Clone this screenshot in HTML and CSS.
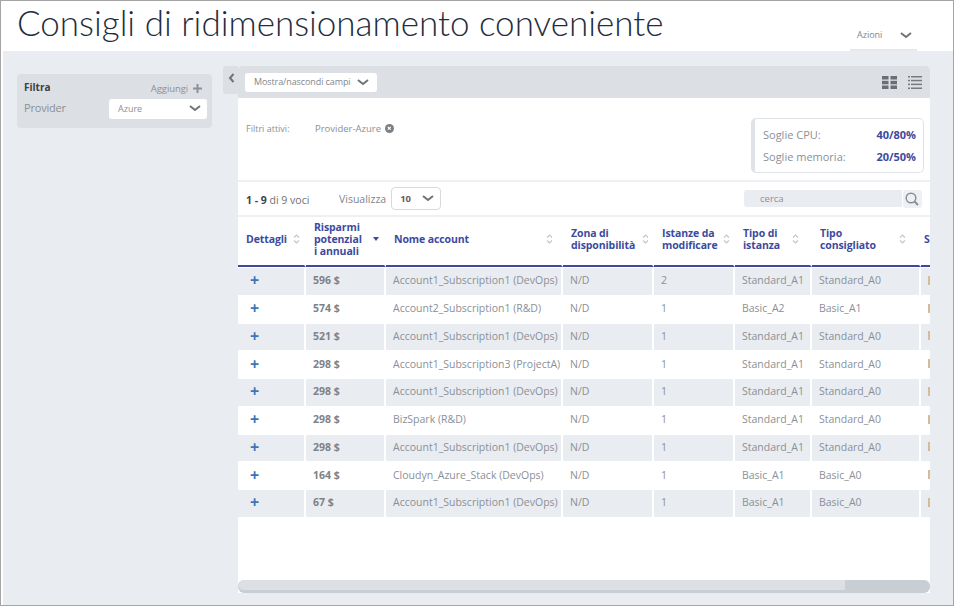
FILE: index.html
```html
<!doctype html>
<html>
<head>
<meta charset="utf-8">
<title>Consigli di ridimensionamento conveniente</title>
<link rel="stylesheet" href="styles.css">
</head>

<body>
<div class="frame">
	<header class="top">
		<h1>Consigli di ridimensionamento conveniente</h1>
		<div class="azioni">Azioni
			<svg class="chev" width="12" height="7" viewBox="0 0 12 7"><path d="M1 1l5 4 5-4" fill="none" stroke="#6f7479" stroke-width="2"/></svg>
		</div>
	</header>
	<div class="main">
		<aside class="filtra">
			<div class="filtra-head"><b>Filtra</b>
				<span class="aggiungi">Aggiungi
					<svg width="9" height="9" viewBox="0 0 9 9"><path d="M4.500 0v9M0 4.500h9" stroke="#8b9096" stroke-width="2"/></svg>
				</span>
			</div>
			<div class="filtra-row">
				<span class="provider-label">Provider</span>
				<div class="provider">Azure
					<svg class="chev" width="12" height="7" viewBox="0 0 12 7"><path d="M1 1l5 4 5-4" fill="none" stroke="#6f7479" stroke-width="2"/></svg>
				</div>
			</div>
		</aside>
		<div class="collapse">
			<svg width="7" height="10" viewBox="0 0 7 10"><path d="M5.500 1L2 5l3.500 4" fill="none" stroke="#6f7479" stroke-width="2"/></svg>
		</div>
		<section class="panel">
			<div class="toolbar">
				<div class="campi">Mostra/nascondi campi
					<svg class="chev" width="12" height="7" viewBox="0 0 12 7"><path d="M1 1l5 4 5-4" fill="none" stroke="#6f7479" stroke-width="2"/></svg>
				</div>
				<div class="views">
					<svg width="15" height="13" viewBox="0 0 15 13" fill="#6b6f74"><rect width="6.500" height="3.500"/><rect x="8.500" width="6.500" height="3.500"/><rect y="4.800" width="6.500" height="3.500"/><rect x="8.500" y="4.800" width="6.500" height="3.500"/><rect y="9.500" width="6.500" height="3.500"/><rect x="8.500" y="9.500" width="6.500" height="3.500"/></svg>
					<svg width="14" height="13" viewBox="0 0 14 13" fill="#777b80"><rect width="2" height="1.500"/><rect x="3" width="11" height="1.500"/><rect y="3.800" width="2" height="1.500"/><rect x="3" y="3.800" width="11" height="1.500"/><rect y="7.600" width="2" height="1.500"/><rect x="3" y="7.600" width="11" height="1.500"/><rect y="11.500" width="2" height="1.500"/><rect x="3" y="11.500" width="11" height="1.500"/></svg>
				</div>
			</div>
			<div class="info">
				<div class="attivi">
					<span class="attivi-label">Filtri attivi:</span>
					<span>Provider-Azure</span>
					<svg width="9" height="9" viewBox="0 0 9 9"><circle cx="4.500" cy="4.500" r="4.500" fill="#7b8085"/><path d="M2.800 2.800l2.900 2.900M5.700 2.800L2.800 5.700" stroke="#fff" stroke-width="1.200"/></svg>
				</div>
				<div class="soglie">
					<div class="soglia"><span>Soglie CPU:</span><b>40/80%</b></div>
					<div class="soglia"><span>Soglie memoria:</span><b>20/50%</b></div>
				</div>
			</div>
			<div class="pager">
				<span class="voci"><b>1 - 9</b> di 9 voci</span>
				<span class="visualizza">Visualizza</span>
				<div class="size">10
					<svg class="chev" width="12" height="7" viewBox="0 0 12 7"><path d="M1 1l5 4 5-4" fill="none" stroke="#6f7479" stroke-width="2"/></svg>
				</div>
				<div class="search">
					<div class="search-box">cerca</div>
					<div class="search-btn">
						<svg width="14" height="14" viewBox="0 0 14 14"><circle cx="6" cy="6" r="4.800" fill="none" stroke="#8a8f94" stroke-width="1.500"/><path d="M9.500 9.500L13 13" stroke="#8a8f94" stroke-width="2"/></svg>
					</div>
				</div>
			</div>
			<div class="table-wrap">
				<table>
					<thead>
						<tr>
							<th class="c-det"><div class="th"><span>Dettagli</span><svg class="sort" width="7" height="10" viewBox="0 0 7 10"><path d="M1 3.500l2.500-2.500 2.500 2.500M1 6.500l2.500 2.500 2.500-2.500" fill="none" stroke="#c3c6cb" stroke-width="1.200"/></svg></div></th>
							<th class="c-ris"><div class="th"><span>Risparmi<br>potenzial<br>i annuali</span><i class="sort-down"></i></div></th>
							<th class="c-nome"><div class="th"><span>Nome account</span><svg class="sort" width="7" height="10" viewBox="0 0 7 10"><path d="M1 3.500l2.500-2.500 2.500 2.500M1 6.500l2.500 2.500 2.500-2.500" fill="none" stroke="#c3c6cb" stroke-width="1.200"/></svg></div></th>
							<th class="c-zona"><div class="th"><span>Zona di<br>disponibilità</span><svg class="sort" width="7" height="10" viewBox="0 0 7 10"><path d="M1 3.500l2.500-2.500 2.500 2.500M1 6.500l2.500 2.500 2.500-2.500" fill="none" stroke="#c3c6cb" stroke-width="1.200"/></svg></div></th>
							<th class="c-ist"><div class="th"><span>Istanze da<br>modificare</span><svg class="sort" width="7" height="10" viewBox="0 0 7 10"><path d="M1 3.500l2.500-2.500 2.500 2.500M1 6.500l2.500 2.500 2.500-2.500" fill="none" stroke="#c3c6cb" stroke-width="1.200"/></svg></div></th>
							<th class="c-tipo"><div class="th"><span>Tipo di<br>istanza</span><svg class="sort" width="7" height="10" viewBox="0 0 7 10"><path d="M1 3.500l2.500-2.500 2.500 2.500M1 6.500l2.500 2.500 2.500-2.500" fill="none" stroke="#c3c6cb" stroke-width="1.200"/></svg></div></th>
							<th class="c-cons"><div class="th"><span>Tipo<br>consigliato</span><svg class="sort" width="7" height="10" viewBox="0 0 7 10"><path d="M1 3.500l2.500-2.500 2.500 2.500M1 6.500l2.500 2.500 2.500-2.500" fill="none" stroke="#c3c6cb" stroke-width="1.200"/></svg></div></th>
							<th class="c-s"><div class="th"><span>S</span></div></th>
						</tr>
					</thead>
					<tbody>
						<tr><td class="add">+</td><td class="money">596 $</td><td>Account1_Subscription1 (DevOps)</td><td>N/D</td><td>2</td><td>Standard_A1</td><td>Standard_A0</td><td><i class="tag"></i></td></tr>
						<tr><td class="add">+</td><td class="money">574 $</td><td>Account2_Subscription1 (R&amp;D)</td><td>N/D</td><td>1</td><td>Basic_A2</td><td>Basic_A1</td><td><i class="tag"></i></td></tr>
						<tr><td class="add">+</td><td class="money">521 $</td><td>Account1_Subscription1 (DevOps)</td><td>N/D</td><td>1</td><td>Standard_A1</td><td>Standard_A0</td><td><i class="tag"></i></td></tr>
						<tr><td class="add">+</td><td class="money">298 $</td><td>Account1_Subscription3 (ProjectA)</td><td>N/D</td><td>1</td><td>Standard_A1</td><td>Standard_A0</td><td><i class="tag"></i></td></tr>
						<tr><td class="add">+</td><td class="money">298 $</td><td>Account1_Subscription1 (DevOps)</td><td>N/D</td><td>1</td><td>Standard_A1</td><td>Standard_A0</td><td><i class="tag"></i></td></tr>
						<tr><td class="add">+</td><td class="money">298 $</td><td>BizSpark (R&amp;D)</td><td>N/D</td><td>1</td><td>Standard_A1</td><td>Standard_A0</td><td><i class="tag"></i></td></tr>
						<tr><td class="add">+</td><td class="money">298 $</td><td>Account1_Subscription1 (DevOps)</td><td>N/D</td><td>1</td><td>Standard_A1</td><td>Standard_A0</td><td><i class="tag"></i></td></tr>
						<tr><td class="add">+</td><td class="money">164 $</td><td>Cloudyn_Azure_Stack (DevOps)</td><td>N/D</td><td>1</td><td>Basic_A1</td><td>Basic_A0</td><td><i class="tag"></i></td></tr>
						<tr><td class="add">+</td><td class="money">67 $</td><td>Account1_Subscription1 (DevOps)</td><td>N/D</td><td>1</td><td>Basic_A1</td><td>Basic_A0</td><td><i class="tag"></i></td></tr>
					</tbody>
				</table>
			</div>
			<div class="scrollbar"><div class="thumb"></div></div>
		</section>
	</div>
</div>
</body>
</html>
```

FILE: styles.css
```css
* {margin:0; padding:0; box-sizing:border-box; list-style:none;}
html, body {height:100%; background:#fff;}
body {font-family:"Open Sans", "Noto Sans", sans-serif; font-size:10px; color:#8b9096; overflow:hidden;}
i {font-style:normal;}

.frame {width:954px; height:606px; border:1.500px solid #a5a5a5; background:#e9ecf1; display:flex; flex-direction:column;}

.top {height:50px; flex:none; background:#fff; display:flex; justify-content:space-between; padding-left:16px; padding-right:36px;}
.top h1 {font-family:"Lato", sans-serif; font-weight:300; font-size:35px; line-height:42px; height:42px; color:#1f2d3d;}
.azioni {width:67px; height:50px; padding:28px 5px 0 7px; border-bottom:2px solid #e6e8ec; display:flex; justify-content:space-between; font-size:9px; line-height:12px; color:#81868b;}
.azioni .chev {margin-top:3px;}

.main {flex:1; display:flex; align-items:flex-start; padding:15px 23px 12px 14px; min-height:0; border-left:2px solid #fff;}

.filtra {width:195px; height:54px; margin-top:8px; padding:6px 5px 0 7px; background:#dcdfe4; border-radius:4px; flex:none;}
.filtra-head {display:flex; justify-content:space-between; align-items:center; height:13px; padding-right:5px;}
.filtra-head b {color:#3a3f45; font-size:10px;}
.aggiungi {display:flex; align-items:center; gap:5px; font-size:9.500px; margin-top:4px; letter-spacing:-0.1px; color:#8b9096;}
.filtra-row {display:flex; justify-content:space-between; margin-top:6px;}
.provider-label {font-size:11px; line-height:14px; letter-spacing:-0.2px; margin-top:2px;}
.provider {width:98px; height:20px; background:#fff; border-radius:3px; padding:3px 6px 0 9px; display:flex; justify-content:space-between; font-size:9px; line-height:14px; color:#8b9096;}
.provider .chev {margin-top:3px;}

.collapse {width:15px; height:28px; margin:0 0 0 11px; padding:6px 0 0 5px; background:#dcdfe4; flex:none; border-radius:3px 0 0 3px;}

.panel {flex:1; align-self:stretch; background:#fff; display:flex; flex-direction:column; min-width:0; border-radius:4px 4px 0 0; overflow:hidden;}
.toolbar {height:32px; flex:none; background:#dcdfe4; display:flex; justify-content:space-between; padding:7px 8px 0 7px;}
.campi {width:132px; height:19px; background:#fff; border-radius:3px; display:flex; justify-content:space-between; padding:0 8px 0 9px; font-size:9px; letter-spacing:-0.1px; white-space:nowrap; line-height:18px; color:#81868b;}
.campi .chev {margin-top:6px;}
.views {display:flex; gap:11px; padding-top:3px;}

.info {height:84px; flex:none; display:flex; justify-content:space-between; padding:0 6px 0 8px; border-bottom:2px solid #eef0f3;}
.attivi {display:flex; align-items:center; gap:4px; height:60px; font-size:9.500px; color:#8b9096;}
.attivi-label {width:65px; font-size:9px;}
.soglie {width:173px; height:55px; margin-top:20px; background:#fff; border:1px solid #dfe2e7; border-left:4px solid #dfe2e7; border-radius:5px; padding:5px 7px 0 8px; font-size:11px;}
.soglia {display:flex; justify-content:space-between; line-height:22px;}
.soglia b {color:#3c4a9e;}

.pager {height:35px; flex:none; display:flex; align-items:center; padding:0 8px 0 8px; border-bottom:2px solid #eef0f3; font-size:10.500px;}
.voci {color:#6b7076; width:93px; margin-top:2px;}
.voci b {color:#3f444a;}
.visualizza {font-size:10.500px; color:#81868b; margin-right:5px;}
.size {width:50px; height:23px; border:1px solid #d6d9de; border-radius:4px; display:flex; justify-content:space-between; padding:0 6px 0 8px; font-size:9.500px; font-weight:700; line-height:21px; color:#6b5a60;}
.size .chev {margin-top:7px;}
.search {margin-left:auto; display:flex; gap:1px;}
.search-box {width:158px; height:17px; background:#e9ecf1; border-radius:3px 0 0 3px; padding-left:16px; font-size:9.500px; line-height:17px;}
.search-btn {width:19px; height:18px; background:#eef0f3; border-radius:3px; padding:2px 0 0 2px;}

.table-wrap {flex:1; overflow:hidden; min-height:0;}
table {border-collapse:separate; border-spacing:0; table-layout:fixed; width:720px; font-size:10.500px;}
th {height:50px; border-bottom:2px solid #3d4a9c; padding:0 8px 4px 8px; text-align:left; border-right:2px solid #fff; color:#3c4a9e; font-size:10.500px; line-height:12px;}
.c-det {width:68px; padding-right:4px;}
.c-ris {width:80px; padding-right:5px;}
.c-nome {width:177px; padding-right:8px;}
.c-zona {width:91px; padding-right:3px;}
.c-ist {width:81px; padding-right:3px;}
.c-tipo {width:77px; padding-right:11px;}
.c-cons {width:109px; padding-right:13px;}
.c-s {width:37px; padding-left:3px;}
.th {display:flex; justify-content:space-between; align-items:center; letter-spacing:-0.1px;}
.sort {flex:none;}
.sort-down {width:0; height:0; flex:none; border:3px solid transparent; border-top:4px solid #3c4a9e; border-bottom:0;}
td {height:27.750px; padding:0 7px 2px 7px; border-top:1px solid #fff; border-right:2px solid #fff; white-space:nowrap; overflow:hidden; color:#8b9096;}
tbody tr:nth-child(odd) td {background:#e9ecf1;}
.add {color:#3f74b5; font-size:16px; font-weight:700; padding-left:12px; line-height:16px;}
.money {font-weight:700; color:#7d8288;}
.tag {display:block; width:3px; height:9px; background:#d6bb98;}

.scrollbar {height:13px; flex:none; background:#c9cdd4; border-radius:6px; margin-top:auto; overflow:hidden;}
.thumb {width:607px; height:10px; background:#dcdfe4; border-radius:6px 0 0 6px;}
```
